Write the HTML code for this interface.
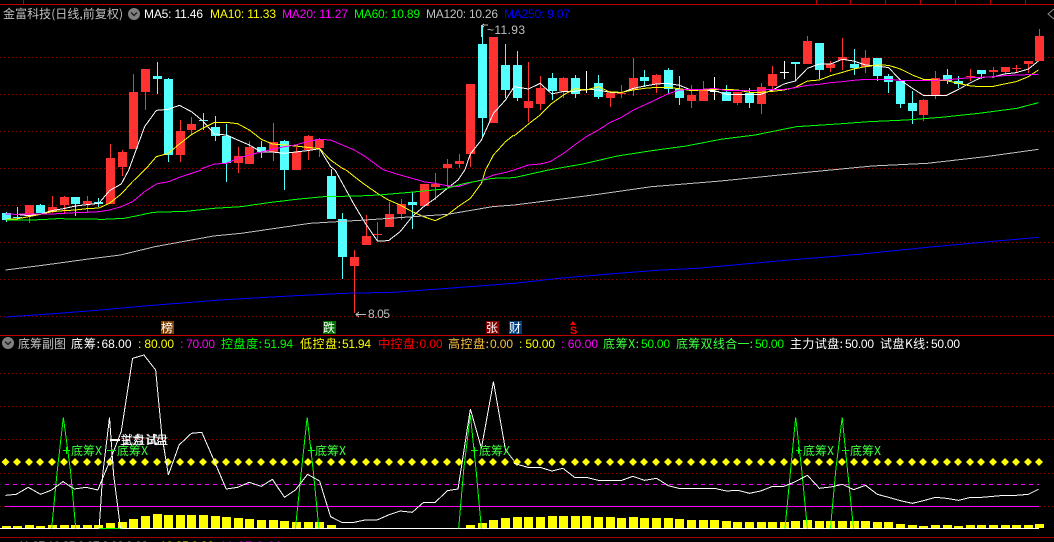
<!DOCTYPE html>
<html>
<head>
<meta charset="utf-8">
<style>
html,body{margin:0;padding:0;background:#000;width:1054px;height:542px;overflow:hidden}
svg{display:block;position:absolute;left:0;top:0}
text{font-family:"Liberation Sans","WenQuanYi Zen Hei",sans-serif;font-size:12px;white-space:pre}
.c{font-family:"WenQuanYi Zen Hei","Noto Sans CJK SC",sans-serif}
polyline{fill:none;vector-effect:non-scaling-stroke;stroke-width:1;shape-rendering:crispEdges}
.w{stroke:#fff}.y{stroke:#ff0}.m{stroke:#f0f}.g{stroke:#0f0}.s{stroke:#c0c0c0}.b{stroke:#00f}
</style>
</head>
<body>
<svg width="1054" height="542" viewBox="0 0 1054 542" xmlns="http://www.w3.org/2000/svg">
<rect width="1054" height="542" fill="#000"/>

<!-- top red strip -->
<g shape-rendering="crispEdges" stroke="#c00000" fill="none">
<path d="M0 4.5H1054M23.5 0V4M816.5 0V4M850.5 0V4M885.5 0V4M920.5 0V4M955.5 0V4M990.5 0V4M1025.5 0V4"/>
<path d="M0 335.5H1054"/>
<path d="M0 537.5H1054" stroke="#a00000"/>
</g>
<path d="M1054 9L1048 14L1054 19" stroke="#909090" fill="none"/>

<!-- grids -->
<g shape-rendering="crispEdges" stroke="#900000" stroke-dasharray="1 3" fill="none">
<path d="M0 57.5H1054M0 94.5H1054M0 131.5H1054M0 168.5H1054M0 205.5H1054M0 242.5H1054M0 279.5H1054M0 316.5H1054"/>
<path d="M0 373.5H1054M0 406.5H1054M0 439.5H1054M0 473.5H1054M0 506.5H1054"/>
</g>

<!-- candle wicks -->
<g fill="none" shape-rendering="crispEdges">
<path stroke="#ff3232" d="M29.5 205V223M52.5 196V213M64.5 196V213M87.5 196V212M110.5 144V204M122.5 150V176M133.5 74V149M145.5 69V110M180.5 120V162M191.5 117V135M238.5 147V173M249.5 141V164M273.5 123V161M296.5 147V170M308.5 135V160M319.5 138V157M354.5 250V313M366.5 215V245M377.5 222V241M373 234.5h9M389.5 202V227M401.5 199V220M424.5 184V206M435.5 173V200M447.5 159V187M459.5 154V168M470.5 84V167M493.5 37V123M528.5 62V122M540.5 76V110M563.5 77V98M610.5 91V107M621.5 85V98M617 93.5h9M633.5 58V96M656.5 74V93M691.5 85V108M703.5 81V101M737.5 92V105M761.5 83V114M772.5 66V91M807.5 36V64M830.5 61V72M842.5 38V70M865.5 50V73M923.5 99V121M935.5 71V99M970.5 69V81M966 76.5h9M993.5 67V77M1005.5 67V74M1016.5 65V73M1012 68.5h9M1028.5 61V73M1039.5 29V61"/>
<path stroke="#54ffff" d="M6.5 212V222M17.5 207V220M13 217.5h9M40.5 204V213M75.5 197V216M98.5 198V207M157.5 62V94M168.5 78V162M203.5 113V130M199 120.5h9M215.5 116V141M226.5 124V182M261.5 141V158M284.5 140V190M331.5 169V176M342.5 213V279M412.5 192V229M482.5 25V138M505.5 44V98M517.5 51V101M552.5 73V100M575.5 75V98M598.5 75V99M644.5 70V87M668.5 68V93M679.5 76V105M726.5 85V101M749.5 88V108M795.5 62V81M819.5 43V79M854.5 49V75M877.5 58V81M888.5 74V93M900.5 81V108M912.5 91V124M947.5 69V84M958.5 76V88M981.5 70V79"/>
<path stroke="#fff" d="M586.5 71V93M582 89.5h9M714.5 77V100M710 91.5h9M784.5 61V79M780 72.5h9"/>
</g>
<!-- candle bodies -->
<path shape-rendering="crispEdges" fill="#ff3232" d="M25 205h9v10h-9zM48 207h9v4h-9zM60 197h9v8h-9zM83 201h9v3h-9zM106 158h9v46h-9zM118 152h9v15h-9zM129 92h9v57h-9zM141 69h9v23h-9zM176 131h9v24h-9zM187 124h9v6h-9zM234 156h9v7h-9zM245 147h9v17h-9zM269 142h9v10h-9zM292 152h9v18h-9zM304 136h9v14h-9zM315 139h9v9h-9zM350 257h9v9h-9zM362 236h9v9h-9zM385 214h9v13h-9zM397 204h9v10h-9zM420 184h9v22h-9zM431 184h9v3h-9zM443 164h9v4h-9zM455 161h9v3h-9zM466 84h9v70h-9zM489 37h9v86h-9zM524 101h9v7h-9zM536 88h9v16h-9zM559 78h9v13h-9zM606 93h9v5h-9zM629 78h9v12h-9zM652 75h9v9h-9zM687 95h9v6h-9zM699 90h9v11h-9zM733 92h9v11h-9zM757 87h9v17h-9zM768 74h9v12h-9zM803 41h9v23h-9zM826 64h9v4h-9zM838 57h9v3h-9zM861 58h9v9h-9zM919 100h9v15h-9zM931 78h9v18h-9zM989 70h9v2h-9zM1001 67h9v5h-9zM1024 61h9v3h-9zM1035 36h9v25h-9z"/>
<path shape-rendering="crispEdges" fill="#54ffff" d="M2 213h9v7h-9zM36 205h9v8h-9zM71 197h9v7h-9zM94 202h9v2h-9zM153 76h9v3h-9zM164 79h9v76h-9zM211 127h9v9h-9zM222 136h9v27h-9zM257 147h9v5h-9zM280 141h9v29h-9zM327 176h9v43h-9zM338 219h9v38h-9zM408 202h9v3h-9zM478 44h9v74h-9zM501 65h9v25h-9zM513 65h9v33h-9zM548 78h9v13h-9zM571 78h9v16h-9zM594 83h9v14h-9zM640 77h9v4h-9zM664 70h9v19h-9zM675 89h9v9h-9zM722 92h9v9h-9zM745 93h9v10h-9zM791 62h9v2h-9zM815 43h9v27h-9zM850 64h9v4h-9zM873 58h9v18h-9zM884 76h9v6h-9zM896 81h9v23h-9zM908 103h9v8h-9zM943 75h9v6h-9zM954 81h9v3h-9zM977 70h9v4h-9z"/>

<!-- MA lines, left top (zoom space) -->
<g transform="scale(.34435 .33333)">
<polyline class="w" points="374,510 388,470 420,380 454,331 489,328 521,316 556,335 588,362 623,402 658,405 690,420 724,435 759,456 791,456 826,460 858,456 893,452 928,446 960,500 973,510"/>
<polyline class="w" points="1350,510 1366,462 1398,420 1433,340 1468,300 1492,262"/>
<polyline class="y" points="420,510 425,505 454,470 489,460 521,432 556,404 588,385 623,367 658,367 690,371 724,390 759,418 791,432 826,435 858,438 893,442 928,446 960,480 994,505 1005,510"/>
<polyline class="y" points="1410,510 1433,465 1468,425 1492,405"/>
<polyline class="m" points="585,507 588,505 623,492 658,490 690,475 724,465 759,456 791,448 826,440 858,435 893,425 928,418 960,420 994,435 1029,450 1061,470 1096,497 1115,510"/>
</g>
<!-- right top -->
<g transform="translate(514 0) scale(.34435 .33333)">
<polyline class="w" points="0,260 42,267 76,250 110,282 144,274 176,274 210,268 245,270 278,277 312,278 347,265 379,258 414,252 446,250 480,256 515,270 547,270 582,272 617,283 650,284 684,283 716,283 751,270 784,252 817,243 852,205 887,192 919,192 954,178 986,183 1021,195 1055,198 1088,203 1122,240 1157,265 1189,286 1224,286 1256,286 1291,268 1326,248 1358,232 1392,231 1424,222 1458,218 1494,207 1523,183"/>
<polyline class="y" points="0,408 42,372 76,345 110,310 144,285 176,266 210,270 245,260 278,276 312,277 347,270 379,265 414,262 446,262 480,266 515,272 547,270 582,268 617,268 650,270 684,277 716,277 751,274 784,270 817,262 852,243 887,240 919,227 954,217 986,207 1021,200 1055,195 1088,196 1122,207 1157,225 1189,238 1224,240 1256,242 1291,250 1326,258 1358,260 1392,259 1424,252 1458,245 1494,230 1523,210"/>
<polyline class="m" points="0,510 42,495 76,492 105,485 144,460 176,435 210,410 245,390 278,368 312,352 347,330 379,315 414,298 446,282 480,270 515,268 547,268 582,265 617,272 650,272 684,272 716,270 751,268 784,268 817,263 852,256 887,253 919,248 954,245 986,241 1021,238 1055,238 1088,238 1122,241 1157,241 1189,241 1224,241 1256,240 1291,236 1326,233 1358,232 1392,230 1424,227 1458,225 1494,224 1523,224"/>
<polyline class="g" points="0,533 100,510 200,492 300,468 400,452 500,438 600,418 700,405 820,380 940,372 1030,365 1140,360 1240,352 1350,340 1460,325 1523,308"/>
<polyline class="s" points="800,522 870,515 1040,498 1200,490 1370,470 1523,448"/>
</g>
<!-- left lower -->
<g transform="translate(0 170) scale(.34435 .33333)">
<polyline class="w" points="16,132 47,133 83,137 118,132 150,122 184,116 219,108 252,104 287,100 318,62 352,42 374,0"/>
<polyline class="w" points="973,0 1029,105 1061,160 1096,213 1128,212 1162,185 1197,140 1230,110 1264,85 1299,55 1330,30 1350,0"/>
<polyline class="y" points="16,148 47,147 83,140 118,133 150,125 184,122 219,120 252,116 287,114 318,100 352,72 385,35 420,0"/>
<polyline class="y" points="1005,0 1029,20 1061,45 1096,70 1128,90 1162,105 1197,125 1230,140 1264,152 1299,135 1330,110 1366,85 1398,40 1410,0"/>
<polyline class="m" points="16,132 47,133 83,132 118,132 150,132 184,130 219,128 252,127 287,125 318,120 352,110 385,95 420,65 454,42 489,35 521,22 556,10 585,0"/>
<polyline class="m" points="1115,0 1162,15 1197,25 1230,35 1264,40 1299,47 1330,50 1366,38 1398,30 1433,15 1470,7 1492,0"/>
<polyline class="g" points="16,150 83,150 118,149 166,146 235,147 300,148 360,145 395,138 445,127 540,124 620,115 700,110 780,98 860,88 940,80 1040,78 1100,75 1190,67 1290,57 1350,40 1430,25 1492,23"/>
<polyline class="s" points="16,300 130,285 250,268 350,255 450,230 540,213 620,198 700,190 800,175 900,160 1060,150 1200,140 1300,133 1430,110 1492,105"/>
<polyline class="b" points="16,441 130,433 270,422 430,407 640,390 840,378 1000,370 1140,367 1300,355 1492,340"/>
</g>
<!-- right lower -->
<g transform="translate(514 170) scale(.34435 .33333)">
<polyline class="s" points="0,105 100,92 230,75 400,50 600,33 800,12"/>
<polyline class="b" points="0,340 130,325 300,310 430,300 530,295 660,283 800,270 1000,253 1200,232 1370,216 1523,202"/>
</g>

<!-- extreme labels -->
<path d="M481.5 25V37M482 25h6M484 24l-2 1.5 2 1.5M366 314.5h-10M359 312l-3 2.500 3 2.500" stroke="#c0c0c0" fill="none" shape-rendering="crispEdges"/>
<text x="487" y="34" fill="#c0c0c0" textLength="38">~11.93</text>
<text x="368" y="318" fill="#c0c0c0" textLength="22">8.05</text>

<!-- header -->
<text x="3" y="18" class="c" fill="#c0c0c0" textLength="120">金富科技(日线,前复权)</text>
<circle cx="134" cy="14" r="6" fill="#808080"/>
<path d="M131 12.500l3 3 3-3" stroke="#222" stroke-width="1.500" fill="none"/>
<text x="144" y="18" fill="#fff" textLength="59">MA5: 11.46</text>
<text x="210" y="18" fill="#ff0" textLength="66">MA10: 11.33</text>
<text x="282" y="18" fill="#f0f" textLength="66">MA20: 11.27</text>
<text x="354" y="18" fill="#0f0" textLength="66">MA60: 10.89</text>
<text x="426" y="18" fill="#c0c0c0" textLength="72">MA120: 10.26</text>
<text x="504" y="18" fill="#0000ff" textLength="66">MA250: 9.07</text>

<!-- markers -->
<g shape-rendering="crispEdges">
<rect x="161" y="321" width="13" height="13" fill="#804000"/>
<rect x="323" y="321" width="13" height="13" fill="#007000"/>
<rect x="486" y="321" width="13" height="13" fill="#800000"/>
<rect x="509" y="321" width="13" height="13" fill="#004080"/>
</g>
<text x="161" y="332" class="c" fill="#fff" textLength="13">榜</text>
<text x="323" y="332" class="c" fill="#fff" textLength="13">跌</text>
<text x="486" y="332" class="c" fill="#fff" textLength="13">张</text>
<text x="509" y="332" class="c" fill="#fff" textLength="13">财</text>
<path d="M573 321l-3 4h6z" fill="#f00"/>
<text x="570" y="334" fill="#f00" font-weight="bold" style="font-size:11px">S</text>

<!-- sub panel header -->
<circle cx="8" cy="343" r="6" fill="#808080"/>
<path d="M5 341.500l3 3 3-3" stroke="#222" stroke-width="1.500" fill="none"/>
<g>
<text x="18" y="348" class="c" fill="#c0c0c0" textLength="48">底筹副图</text>
<text x="71" y="348" class="c" fill="#fff" textLength="29">底筹:</text>
<text x="101.500" y="348" fill="#fff" textLength="30">68.00</text>
<text x="138" y="348" fill="#ff0" textLength="36">: 80.00</text>
<text x="180" y="348" fill="#f0f" textLength="35">: 70.00</text>
<text x="221" y="348" class="c" fill="#0f0" textLength="41">控盘度:</text>
<text x="264" y="348" fill="#0f0" textLength="29">51.94</text>
<text x="300" y="348" class="c" fill="#ff0" textLength="41">低控盘:</text>
<text x="342" y="348" fill="#ff0" textLength="29">51.94</text>
<text x="378" y="348" class="c" fill="#f00" textLength="41">中控盘:</text>
<text x="419.500" y="348" fill="#f00" textLength="23">0.00</text>
<text x="448" y="348" class="c" fill="#ffc040" textLength="41">高控盘:</text>
<text x="490" y="348" fill="#ffc040" textLength="23">0.00</text>
<text x="519" y="348" fill="#ff0" textLength="36">: 50.00</text>
<text x="561" y="348" fill="#f0f" textLength="37">: 60.00</text>
<text x="603" y="348" class="c" fill="#40ff40" textLength="36">底筹X:</text>
<text x="641" y="348" fill="#0f0" textLength="29">50.00</text>
<text x="676" y="348" class="c" fill="#40ff40" textLength="77">底筹双线合一:</text>
<text x="755" y="348" fill="#0f0" textLength="29">50.00</text>
<text x="790" y="348" class="c" fill="#fff" textLength="53">主力试盘:</text>
<text x="845" y="348" fill="#fff" textLength="29">50.00</text>
<text x="880" y="348" class="c" fill="#fff" textLength="49">试盘K线:</text>
<text x="931" y="348" fill="#fff" textLength="29">50.00</text>
</g>

<!-- sub panel lines -->
<g shape-rendering="crispEdges" fill="none">
<path d="M5 484.500H1039" stroke="#f0f" stroke-dasharray="4 4"/>
<path d="M5 506.500H1039" stroke="#f0f"/>
</g>

<!-- volume-like bars -->
<path shape-rendering="crispEdges" fill="#ff0" d="M2 528v-2h9v2zM13 528v-2h9v2zM25 528v-3h9v3zM36 528v-2h9v2zM48 528v-3h9v3zM60 528v-3h9v3zM71 528v-3h9v3zM83 528v-3h9v3zM94 528v-3h9v3zM106 528v-5h9v5zM118 528v-6h9v6zM129 528v-9h9v9zM141 528v-12h9v12zM153 528v-14h9v14zM164 528v-13h9v13zM176 528v-13h9v13zM187 528v-13h9v13zM199 528v-13h9v13zM211 528v-12h9v12zM222 528v-11h9v11zM234 528v-10h9v10zM245 528v-9h9v9zM257 528v-8h9v8zM269 528v-8h9v8zM280 528v-7h9v7zM292 528v-6h9v6zM304 528v-6h9v6zM315 528v-6h9v6zM327 528v-3h9v3zM466 528v-3h9v3zM478 528v-5h9v5zM489 528v-8h9v8zM501 528v-10h9v10zM513 528v-11h9v11zM524 528v-11h9v11zM536 528v-11h9v11zM548 528v-12h9v12zM559 528v-12h9v12zM571 528v-12h9v12zM582 528v-12h9v12zM594 528v-11h9v11zM606 528v-11h9v11zM617 528v-10h9v10zM629 528v-11h9v11zM640 528v-10h9v10zM652 528v-10h9v10zM664 528v-10h9v10zM675 528v-9h9v9zM687 528v-8h9v8zM699 528v-8h9v8zM710 528v-8h9v8zM722 528v-7h9v7zM733 528v-6h9v6zM745 528v-6h9v6zM757 528v-6h9v6zM768 528v-6h9v6zM780 528v-6h9v6zM791 528v-7h9v7zM803 528v-8h9v8zM815 528v-7h9v7zM826 528v-7h9v7zM838 528v-7h9v7zM850 528v-7h9v7zM861 528v-7h9v7zM873 528v-6h9v6zM884 528v-6h9v6zM896 528v-4h9v4zM908 528v-3h9v3zM919 528v-2h9v2zM931 528v-3h9v3zM943 528v-3h9v3zM954 528v-2h9v2zM966 528v-3h9v3zM977 528v-3h9v3zM989 528v-3h9v3zM1001 528v-3h9v3zM1012 528v-3h9v3zM1024 528v-3h9v3zM1035 528v-4h9v4z"/>
<path shape-rendering="crispEdges" stroke="#fff" fill="none" d="M0 528.500H1039"/>
<path shape-rendering="crispEdges" stroke="#0f0" fill="none" d="M99 528.500H121"/>

<!-- yellow diamonds -->
<path fill="#ff0" d="M5.500 458l4 4-4 4-4-4zM17 458l4 4-4 4-4-4zM29 458l4 4-4 4-4-4zM40 458l4 4-4 4-4-4zM52 458l4 4-4 4-4-4zM64 458l4 4-4 4-4-4zM75 458l4 4-4 4-4-4zM87 458l4 4-4 4-4-4zM98 458l4 4-4 4-4-4zM110 458l4 4-4 4-4-4zM122 458l4 4-4 4-4-4zM133 458l4 4-4 4-4-4zM145 458l4 4-4 4-4-4zM157 458l4 4-4 4-4-4zM168 458l4 4-4 4-4-4zM180 458l4 4-4 4-4-4zM191 458l4 4-4 4-4-4zM203 458l4 4-4 4-4-4zM215 458l4 4-4 4-4-4zM226 458l4 4-4 4-4-4zM238 458l4 4-4 4-4-4zM249 458l4 4-4 4-4-4zM261 458l4 4-4 4-4-4zM273 458l4 4-4 4-4-4zM284 458l4 4-4 4-4-4zM296 458l4 4-4 4-4-4zM308 458l4 4-4 4-4-4zM319 458l4 4-4 4-4-4zM331 458l4 4-4 4-4-4zM342 458l4 4-4 4-4-4zM354 458l4 4-4 4-4-4zM366 458l4 4-4 4-4-4zM377 458l4 4-4 4-4-4zM389 458l4 4-4 4-4-4zM401 458l4 4-4 4-4-4zM412 458l4 4-4 4-4-4zM424 458l4 4-4 4-4-4zM435 458l4 4-4 4-4-4zM447 458l4 4-4 4-4-4zM459 458l4 4-4 4-4-4zM470 458l4 4-4 4-4-4zM482 458l4 4-4 4-4-4zM493 458l4 4-4 4-4-4zM505 458l4 4-4 4-4-4zM517 458l4 4-4 4-4-4zM528 458l4 4-4 4-4-4zM540 458l4 4-4 4-4-4zM552 458l4 4-4 4-4-4zM563 458l4 4-4 4-4-4zM575 458l4 4-4 4-4-4zM586 458l4 4-4 4-4-4zM598 458l4 4-4 4-4-4zM610 458l4 4-4 4-4-4zM621 458l4 4-4 4-4-4zM633 458l4 4-4 4-4-4zM644 458l4 4-4 4-4-4zM656 458l4 4-4 4-4-4zM668 458l4 4-4 4-4-4zM679 458l4 4-4 4-4-4zM691 458l4 4-4 4-4-4zM703 458l4 4-4 4-4-4zM714 458l4 4-4 4-4-4zM726 458l4 4-4 4-4-4zM737 458l4 4-4 4-4-4zM749 458l4 4-4 4-4-4zM761 458l4 4-4 4-4-4zM772 458l4 4-4 4-4-4zM784 458l4 4-4 4-4-4zM795 458l4 4-4 4-4-4zM807 458l4 4-4 4-4-4zM819 458l4 4-4 4-4-4zM830 458l4 4-4 4-4-4zM842 458l4 4-4 4-4-4zM854 458l4 4-4 4-4-4zM865 458l4 4-4 4-4-4zM877 458l4 4-4 4-4-4zM888 458l4 4-4 4-4-4zM900 458l4 4-4 4-4-4zM912 458l4 4-4 4-4-4zM923 458l4 4-4 4-4-4zM935 458l4 4-4 4-4-4zM947 458l4 4-4 4-4-4zM958 458l4 4-4 4-4-4zM970 458l4 4-4 4-4-4zM981 458l4 4-4 4-4-4zM993 458l4 4-4 4-4-4zM1005 458l4 4-4 4-4-4zM1016 458l4 4-4 4-4-4zM1028 458l4 4-4 4-4-4zM1039 458l4 4-4 4-4-4z"/>

<!-- sub panel curves -->
<g transform="translate(0 335) scale(.34435 .33333)">
<polyline class="g" points="150,580 166,410 184,247 205,410 220,580"/>
<polyline class="g" points="858,580 875,410 892,247 910,410 926,580"/>
<polyline class="g" points="1332,580 1347,400 1366,240 1383,410 1398,580"/>
<polyline class="w" points="288,580 298,420 318,248 330,420 350,580"/>
<polyline class="w" points="16,481 47,478 82,457 118,478 150,465 183,440 216,462 250,457 284,465 318,380 352,290 385,70 418,60 452,105 470,300 489,420 520,330 556,295 586,292 621,375 657,462 690,457 724,442 759,454 791,433 826,487 858,465 893,418 928,438 960,545 992,562 1028,562 1060,555 1095,555 1128,540 1162,528 1197,532 1230,502 1264,502 1299,467 1330,462 1366,222 1398,340 1433,140 1468,345 1492,376"/>
</g>
<g transform="translate(514 335) scale(.34435 .33333)">
<polyline class="g" points="787,580 800,440 818,247 835,400 852,580"/>
<polyline class="g" points="919,580 935,400 953,247 970,420 986,580"/>
<polyline class="w" points="0,385 40,397 76,397 110,408 142,400 176,427 210,427 245,436 276,437 310,437 345,424 379,436 414,430 448,452 479,460 515,460 547,460 582,460 617,468 650,466 684,475 716,468 751,454 784,454 817,440 852,421 887,460 919,456 954,448 986,464 1021,451 1055,478 1088,487 1122,497 1157,505 1189,497 1224,487 1256,490 1291,496 1326,487 1358,487 1392,484 1424,481 1458,481 1494,478 1523,463"/>
</g>

<!-- annotations -->
<path shape-rendering="crispEdges" fill="none" stroke="#0f0" d="M63 450.500h7M66.500 447v7M107 450.500h9M111.500 447v7M308 450.500h7M311.500 447v7M471 450.500h7M474.500 447v7M796 450.500h6M798.500 447v7M842 450.500h7M845.500 447v7"/>
<text x="71" y="455" class="c" fill="#40ff40" textLength="31">底筹X</text>
<text x="117" y="455" class="c" fill="#40ff40" textLength="31">底筹X</text>
<text x="315" y="455" class="c" fill="#40ff40" textLength="31">底筹X</text>
<text x="479" y="455" class="c" fill="#40ff40" textLength="31">底筹X</text>
<text x="803" y="455" class="c" fill="#40ff40" textLength="31">底筹X</text>
<text x="850" y="455" class="c" fill="#40ff40" textLength="31">底筹X</text>
<path shape-rendering="crispEdges" stroke="#fff" stroke-width="2" fill="none" d="M110 440h10"/>
<text x="120" y="444" class="c" fill="#fff" textLength="24">主力</text>
<text x="121" y="444" class="c" fill="#fff" textLength="24">试盘</text>
<text x="146" y="444" class="c" fill="#fff" textLength="22">试盘</text>
<text x="145" y="444" class="c" fill="#fff" textLength="23">试盘</text>

<!-- clipped bottom row -->
<circle cx="8" cy="548" r="6" fill="#808080"/>
<text x="18" y="550" fill="#c0c0c0" textLength="130">11.27 10.35 9.07 8.92 9.08</text>
<text x="160" y="550" fill="#ff0" textLength="54">10.35 9.92</text>
<text x="220" y="550" fill="#f0f" textLength="62">11.27 9.09</text>
</svg>
</body>
</html>
